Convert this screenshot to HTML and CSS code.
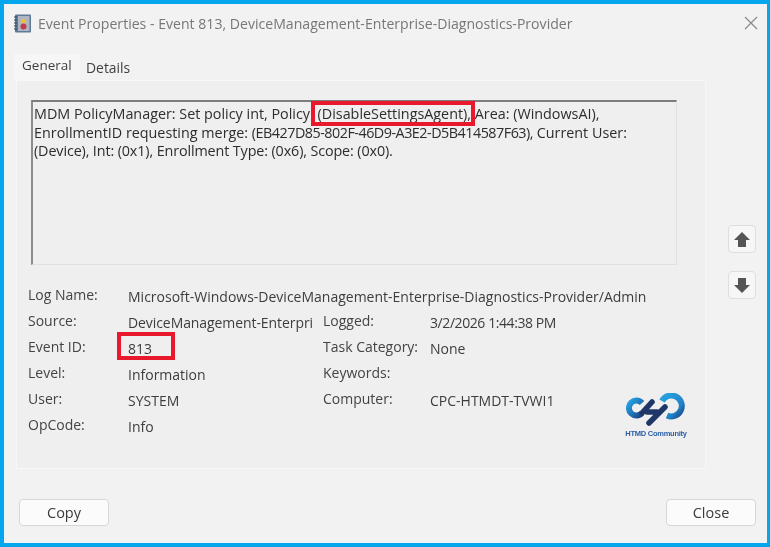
FILE: index.html
```html
<!DOCTYPE html>
<html lang="en">
<head>
<meta charset="utf-8">
<title>Event Properties</title>
<link rel="stylesheet" href="styles.css">
</head>
<body>
<div class="window">
  <header class="titlebar">
    <svg class="app-icon" width="19" height="19" viewBox="0 0 19 19">
      <rect x="2" y="0.5" width="16" height="18" rx="1" fill="#5f7896"/>
      <rect x="5" y="2" width="11.500" height="15" fill="#aeb6c4"/>
      <path d="M1 3h3M1 6h3M1 9h3M1 12h3M1 15h3" stroke="#33465e" stroke-width="1.200"/>
      <path d="M10.500 3.500l3 5.500h-6z" fill="#eec22e"/>
      <circle cx="10.500" cy="12.500" r="3" fill="#c23a4c"/>
    </svg>
    <span class="title">Event Properties - Event 813, DeviceManagement-Enterprise-Diagnostics-Provider</span>
    <svg class="close-x" width="14" height="14" viewBox="0 0 14 14">
      <path d="M1 1l12 12M13 1L1 13" stroke="#8a8a8a" stroke-width="1.200" fill="none"/>
    </svg>
  </header>

  <nav class="tabs">
    <div class="tab tab-active">General</div>
    <div class="tab">Details</div>
  </nav>

  <div class="main">
    <section class="panel">
      <div class="message">
        MDM PolicyManager: Set policy int, Policy: <span class="mark">(DisableSettingsAgent),</span> Area: (WindowsAI), EnrollmentID requesting merge: <span class="guid">(EB427D85-802F-46D9-A3E2-D5B414587F63),</span> Current User: <span class="tight">(Device), Int: (0x1), Enrollment Type: (0x6), Scope: (0x0).</span>
      </div>

      <div class="details">
        <div class="label">Log Name:</div>
        <div class="value span3">Microsoft-Windows-DeviceManagement-Enterprise-Diagnostics-Provider/Admin</div>

        <div class="label">Source:</div>
        <div class="value source">DeviceManagement-Enterpri</div>
        <div class="label">Logged:</div>
        <div class="value date">3/2/2026 1:44:38 PM</div>

        <div class="label">Event ID:</div>
        <div class="value"><span class="mark-id">813</span></div>
        <div class="label">Task Category:</div>
        <div class="value">None</div>

        <div class="label">Level:</div>
        <div class="value">Information</div>
        <div class="label">Keywords:</div>
        <div class="value"></div>

        <div class="label">User:</div>
        <div class="value">SYSTEM</div>
        <div class="label">Computer:</div>
        <div class="value">CPC-HTMDT-TVWI1</div>

        <div class="label">OpCode:</div>
        <div class="value">Info</div>
      </div>

      <div class="logo">
        <svg width="60" height="33" viewBox="0 0 60 33">
          <defs>
            <linearGradient id="lg-left" x1="0" y1="0" x2="1" y2="1">
              <stop offset="0" stop-color="#27a3e0"/>
              <stop offset="0.6" stop-color="#1f6fb5"/>
              <stop offset="1" stop-color="#1c3f7c"/>
            </linearGradient>
            <linearGradient id="lg-right" x1="0" y1="0" x2="1" y2="1">
              <stop offset="0" stop-color="#27a3e0"/>
              <stop offset="0.7" stop-color="#2284c8"/>
              <stop offset="1" stop-color="#1c4a8c"/>
            </linearGradient>
          </defs>
          <path d="M16 10A7.500 7.500 0 1 0 16 20" fill="none" stroke="url(#lg-left)" stroke-width="6"/>
          <path d="M36 8A10.500 10.500 0 1 1 41 22.500" fill="none" stroke="url(#lg-right)" stroke-width="6"/>
          <path d="M16 20L26 9M23 30L39 14M21 19h10" fill="none" stroke="#1f3768" stroke-width="5.500" stroke-linecap="round"/>
        </svg>
        <span class="logo-text">HTMD Community</span>
      </div>
    </section>

    <aside class="side">
      <button class="arrow-btn" type="button" aria-label="Previous">
        <svg width="18" height="17" viewBox="0 0 18 17"><path d="M9 1l8 8h-4v7H5V9H1z" fill="#555"/></svg>
      </button>
      <button class="arrow-btn" type="button" aria-label="Next">
        <svg width="18" height="17" viewBox="0 0 18 17"><path d="M5 1h8v7h4l-8 8-8-8h4z" fill="#555"/></svg>
      </button>
    </aside>
  </div>

  <footer class="footer">
    <button class="btn" type="button">Copy</button>
    <button class="btn" type="button">Close</button>
  </footer>
</div>
</body>
</html>
```
FILE: styles.css
```css
*, *::before, *::after { box-sizing: border-box; }

html, body {
  margin: 0;
  padding: 0;
  height: 547px;
  overflow: hidden;
}

body {
  background: #05a6ee;
  font-family: "Open Sans", "Noto Sans", "Liberation Sans", sans-serif;
  font-size: 13.5px;
  color: #3a3a3a;
}

.window {
  margin: 4px 3px 4px 4px;
  height: 539px;
  background: #f2f2f2;
  display: flex;
  flex-direction: column;
  filter: blur(0.35px);
}

.titlebar {
  height: 50px;
  flex: none;
  display: flex;
  align-items: center;
  padding: 0 9px 12px 9px;
}

.app-icon { flex: none; }

.title {
  margin-left: 6px;
  font-size: 14.1px;
  color: #777;
  flex: 1;
  white-space: nowrap;
}

.close-x { flex: none; }

.tabs {
  height: 26px;
  flex: none;
  display: flex;
  padding-left: 10px;
}

.tab {
  padding: 4px 6px 0 6px;
  width: 52px;
  color: #3f3f3f;
  font-size: 13.9px;
}

.tab-active {
  width: 66px;
  padding: 2px 8px 0;
  background: #f6f6f6;
  font-size: 13.5px;
}

.main {
  display: flex;
  flex: none;
  height: 389px;
  padding-left: 12px;
}

.panel {
  position: relative;
  width: 690px;
  height: 389px;
  background: #f0efef;
  border: 1px solid #f7f7f7;
  padding: 19px 12px 0 11px;
}

.message {
  margin-left: 3px;
  width: 646px;
  height: 165px;
  border-top: 2px solid #7d7d7d;
  border-left: 2px solid #8c8c8c;
  border-right: 1px solid #e0e0e0;
  border-bottom: 1px solid #e0e0e0;
  padding: 3px 10px 0 1px;
  line-height: 18.500px;
  font-size: 14.35px;
  color: #2d2d2d;
}

.guid { letter-spacing: -0.5px; }

.tight { letter-spacing: -0.12px; }

.mark {
  position: relative;
}

.mark::after {
  content: "";
  position: absolute;
  left: -7px;
  right: -4px;
  top: -3px;
  bottom: -3px;
  border: 4px solid #e8192c;
}

.details {
  margin-top: 18px;
  display: grid;
  grid-template-columns: 100px 195px 107px 1fr;
  grid-auto-rows: 26px;
  align-items: center;
  font-size: 14px;
}

.label {
  padding-bottom: 3px;
  white-space: nowrap;
  color: #444;
}

.value {
  white-space: nowrap;
  color: #3d3d3d;
}

.span3 { grid-column: span 3; }

.source { letter-spacing: -0.08px; }

.date { letter-spacing: -0.42px; }

.mark-id {
  position: relative;
}

.mark-id::after {
  content: "";
  position: absolute;
  left: -11px;
  top: -7px;
  width: 58px;
  height: 28px;
  border: 4px solid #e8192c;
}

.logo {
  position: absolute;
  left: 609px;
  top: 312px;
  width: 60px;
  display: flex;
  flex-direction: column;
  align-items: center;
}

.logo-text {
  margin-top: 3px;
  font-family: "Liberation Sans", sans-serif;
  font-size: 7.5px;
  font-weight: 700;
  letter-spacing: -0.25px;
  color: #2a5fa5;
  white-space: nowrap;
}

.side {
  display: flex;
  flex-direction: column;
  gap: 18px;
  padding: 145px 0 0 22px;
}

.arrow-btn {
  width: 28px;
  height: 28px;
  padding: 0;
  display: flex;
  align-items: center;
  justify-content: center;
  background: #f6f6f6;
  border: 1px solid #dedede;
  border-radius: 4px;
}

.footer {
  display: flex;
  justify-content: space-between;
  padding: 30px 11px 0 15px;
}

.btn {
  width: 90px;
  height: 27px;
  padding: 0 0 1px;
  background: #fbfbfb;
  border: 1px solid #d6d6d6;
  border-radius: 4px;
  font-family: "Open Sans", "Noto Sans", sans-serif;
  font-size: 14.5px;
  color: #3a3a3a;
}
```
